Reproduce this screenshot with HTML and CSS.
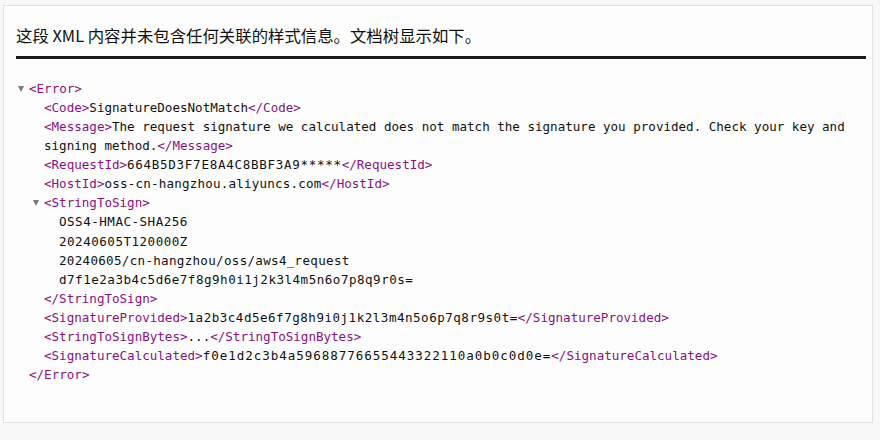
FILE: index.html
```html
<!DOCTYPE html>
<html lang="zh-CN">
<head>
<meta charset="utf-8">
<link rel="stylesheet" href="styles.css">
</head>
<body>
<div class="frame">
  <div class="header">
    <p class="info">这段 XML 内容并未包含任何关联的样式信息。文档树显示如下。</p>
    <div class="rule"></div>
  </div>
  <div class="tree">
    <div class="node">
      <div class="line"><span class="tri"></span><span class="tag">&lt;Error&gt;</span></div>
      <div class="kids">
        <div class="line"><span class="tag">&lt;Code&gt;</span>SignatureDoesNotMatch<span class="tag">&lt;/Code&gt;</span></div>
        <div class="line"><span class="tag">&lt;Message&gt;</span>The request signature we calculated does not match the signature you provided. Check your key and signing method.<span class="tag">&lt;/Message&gt;</span></div>
        <div class="line"><span class="tag">&lt;RequestId&gt;</span><span class="w4">664B5D3F7E8A4C8BBF3A9*****</span><span class="tag">&lt;/RequestId&gt;</span></div>
        <div class="line"><span class="tag">&lt;HostId&gt;</span><span class="w1">oss-cn-hangzhou.aliyuncs.com</span><span class="tag">&lt;/HostId&gt;</span></div>
        <div class="node">
          <div class="line"><span class="tri"></span><span class="tag">&lt;StringToSign&gt;</span></div>
          <div class="kids">
            <div class="line w3">OSS4-HMAC-SHA256</div>
            <div class="line w3">20240605T120000Z</div>
            <div class="line w2">20240605/cn-hangzhou/oss/aws4_request</div>
            <div class="line w3">d7f1e2a3b4c5d6e7f8g9h0i1j2k3l4m5n6o7p8q9r0s=</div>
          </div>
          <div class="line"><span class="tag">&lt;/StringToSign&gt;</span></div>
        </div>
        <div class="line"><span class="tag">&lt;SignatureProvided&gt;</span><span class="w3">1a2b3c4d5e6f7g8h9i0j1k2l3m4n5o6p7q8r9s0t=</span><span class="tag">&lt;/SignatureProvided&gt;</span></div>
        <div class="line"><span class="tag">&lt;StringToSignBytes&gt;</span>...<span class="tag">&lt;/StringToSignBytes&gt;</span></div>
        <div class="line"><span class="tag">&lt;SignatureCalculated&gt;</span><span class="w5">f0e1d2c3b4a59688776655443322110a0b0c0d0e=</span><span class="tag">&lt;/SignatureCalculated&gt;</span></div>
      </div>
      <div class="line"><span class="tag">&lt;/Error&gt;</span></div>
    </div>
  </div>
</div>
</body>
</html>
```
FILE: styles.css
```css
html, body {
  margin: 0;
  padding: 0;
  background: #f8f8f8;
}
.frame {
  margin: 5px 7px 0 3px;
  height: 418px;
  box-sizing: border-box;
  background: #fdfdfd;
  border: 1px solid #e2e2e2;
}
.header {
  padding: 0 6px 0 12px;
}
.info {
  margin: 0;
  padding-top: 18px;
  font-family: "Noto Sans CJK SC", "Noto Sans", sans-serif;
  font-size: 16.4px;
  line-height: 22px;
  color: #111;
}
.rule {
  margin-top: 10px;
  height: 3px;
  background: #1a1a1a;
}
.tree {
  padding: 19.5px 18px 0 25px;
  font-family: "DejaVu Sans Mono", "Liberation Mono", monospace;
  font-size: 12.55px;
  line-height: 19.13px;
  color: #111;
}
.line {
  position: relative;
}
.kids {
  padding-left: 15px;
}
.tri {
  position: absolute;
  left: -11px;
  top: 7px;
  width: 0;
  height: 0;
  border-left: 3.5px solid transparent;
  border-right: 3.5px solid transparent;
  border-top: 6px solid #7a7a7a;
}
.tag {
  color: #881280;
}
.w1 { letter-spacing: 0.2px; }
.w2 { letter-spacing: 0.3px; }
.w3 { letter-spacing: 0.5px; }
.w4 { letter-spacing: 0.7px; }
.w5 { letter-spacing: 0.95px; }
```
